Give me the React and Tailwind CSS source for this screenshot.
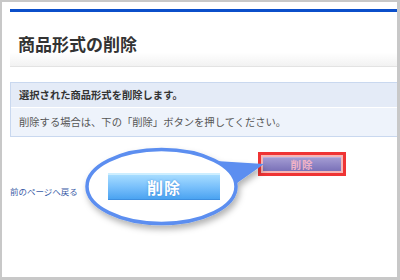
export default function App() {
  return (
    <div
      className="w-[400px] h-[280px] bg-[#c8c8c8] pt-[2px] pl-[2px] pr-[3px] pb-[3px]"
      style={{ fontFamily: '"Noto Sans CJK JP", "Noto Sans", sans-serif' }}
    >
      <div className="relative h-full bg-white pl-2 pt-[7px] overflow-hidden">
        <div className="h-[3px] bg-[#0b4fca]" />
        <div className="h-[55px] pl-2 pt-[20px] bg-gradient-to-b from-white from-75% to-[#f2f2f2] border-b border-[#e3e3e3]">
          <h1 className="text-[17px] leading-[24px] font-bold text-[#333]">商品形式の削除</h1>
        </div>

        <div className="mt-[15px] border-y border-l border-[#c9d8ef]">
          <div className="h-[25px] flex items-center pl-2 bg-[#e4ebf7] border-b border-white">
            <p className="text-[10.3px] font-bold text-[#333]">選択された商品形式を削除します。</p>
          </div>
          <div className="h-[28px] flex items-center pl-2 bg-[#eef3fb]">
            <p className="text-[10.3px] text-[#555]">削除する場合は、下の「削除」ボタンを押してください。</p>
          </div>
        </div>

        <a className="block mt-[48px] text-[8.5px] leading-[12px] text-[#3a5ba6]">前のページへ戻る</a>

        {/* actual button, outlined in red */}
        <div className="absolute left-[256px] top-[150px] w-[88px] h-[24px] border-[3px] border-[#ef3434] bg-[#f6b7b7] p-[2px]">
          <div className="h-full flex items-center justify-center bg-gradient-to-b from-[#a39bd2] to-[#7a71b8] border-t border-[#b8b1de]">
            <span className="text-[10.5px] font-bold text-[#f2b3c6] tracking-[1px]">削除</span>
          </div>
        </div>

        {/* callout annotation */}
        <svg
          className="absolute -left-[2px] -top-[2px] pointer-events-none"
          width="400"
          height="280"
          viewBox="0 0 400 280"
        >
          <defs>
            <filter id="sh" x="-20%" y="-20%" width="140%" height="160%">
              <feDropShadow dx="2" dy="4" stdDeviation="3" floodColor="#000" floodOpacity="0.3" />
            </filter>
          </defs>
          <g filter="url(#sh)">
            <polygon points="216,161 264,164 237,183" fill="#5b8ef0" />
            <ellipse cx="161.5" cy="186.5" rx="74.5" ry="37" fill="#fff" stroke="#5b8ef0" strokeWidth="3.5" />
          </g>
        </svg>

        <div className="absolute left-[106px] top-[171px] w-[112px] h-[27px] flex items-center justify-center bg-gradient-to-b from-[#a6dcff] via-[#79c0fb] to-[#4aa3f1] border-t-2 border-[#cdeeff] border-b border-b-[#3d8fe0]">
          <span
            className="text-[16px] font-bold text-white tracking-[1px]"
            style={{ textShadow: '0 0 2px rgba(40,110,200,0.6)' }}
          >
            削除
          </span>
        </div>
      </div>
    </div>
  );
}
